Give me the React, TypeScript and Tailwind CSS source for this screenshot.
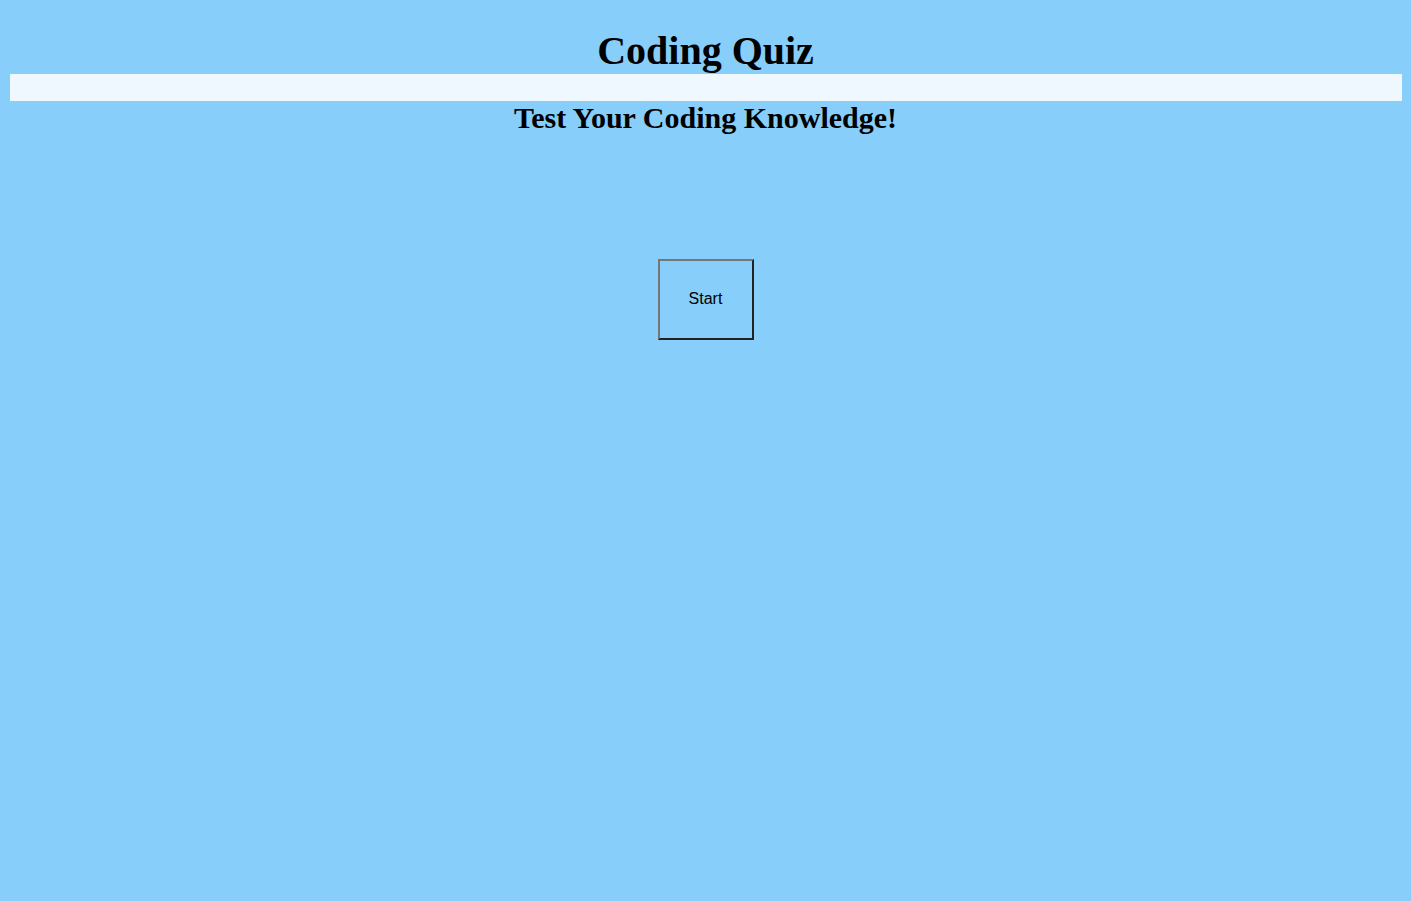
export default function App() {
  return (
    <div className="min-h-screen bg-[#87cefa] pt-[27px] text-black">
      <h1 className="text-center font-['Liberation_Serif',serif] text-[40px] font-bold leading-[47px]">
        Coding Quiz
      </h1>
      <div className="ml-[10px] mr-[9px] h-[27px] bg-[#f0f8ff]" />
      <h2 className="text-center font-['Liberation_Serif',serif] text-[30px] font-bold leading-[34px]">
        Test Your Coding Knowledge!
      </h2>
      <div className="mt-[124px] flex justify-center">
        <button
          type="button"
          className="h-[81px] w-[96px] border-2 border-t-[#767676] border-l-[#767676] border-r-[#222222] border-b-[#222222] bg-transparent pb-[2px] font-['Liberation_Sans',Arial,sans-serif] text-[16px] leading-[18px] text-black"
        >
          Start
        </button>
      </div>
    </div>
  );
}
